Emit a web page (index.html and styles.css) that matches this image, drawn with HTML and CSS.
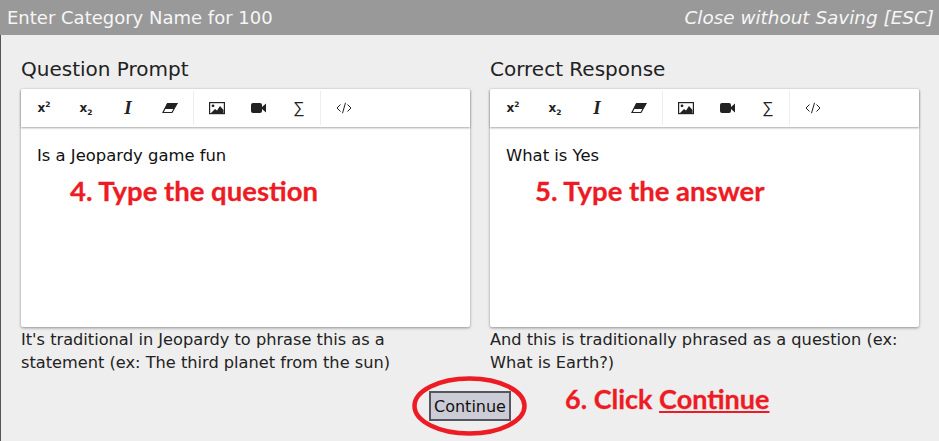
FILE: index.html
```html
<!DOCTYPE html>
<html lang="en">
<head>
    <meta charset="UTF-8">
    <title>Enter Category Name</title>
    <link rel="stylesheet" href="styles.css">
</head>
<body>
    <div class="modal">
        <header class="modal-header">
            <span>Enter Category Name for 100</span>
            <em>Close without Saving [ESC]</em>
        </header>
        <div class="modal-body">
            <div class="columns">
                <section class="column">
                    <h2>Question Prompt</h2>
                    <div class="editor">
                        <div class="toolbar">
                            <div class="tool-group">
                                <button class="tool tool-script"><span>x<sup>2</sup></span></button>
                                <button class="tool tool-script"><span>x<sub>2</sub></span></button>
                                <button class="tool tool-italic">I</button>
                                <button class="tool"><svg width="16" height="12" viewBox="0 0 16 12"><path d="M5.500 1.500h9.500L10 10.500H1z" fill="none" stroke="#222" stroke-width="1.2"/><path d="M5.500 1H15.500L12 7H2.500z" fill="#222"/></svg></button>
                            </div>
                            <div class="tool-group tool-group-media">
                                <button class="tool"><svg width="16" height="14" viewBox="0 0 16 14"><rect x=".6" y="1.600" width="14.800" height="11" fill="none" stroke="#222" stroke-width="1.200"/><circle cx="4" cy="4.800" r="1.400" fill="#222"/><path d="M2 12l4-4 2 1.500 3-4.500 3.500 4v3z" fill="#222"/></svg></button>
                                <button class="tool"><svg width="16" height="12" viewBox="0 0 16 12"><rect x="0" y="1" width="11" height="10" rx="2" fill="#222"/><path d="M11 5l4-3.500v9L11 7z" fill="#222"/></svg></button>
                                <button class="tool tool-sum">∑</button>
                            </div>
                            <div class="tool-group">
                                <button class="tool"><svg width="16" height="12" viewBox="0 0 16 12"><path d="M4.500 2.500L1 6l3.500 3.500M11.500 2.500L15 6l-3.500 3.500M9.500 .8L6.500 11.200" fill="none" stroke="#222" stroke-width="1"/></svg></button>
                            </div>
                        </div>
                        <div class="editor-text">Is a Jeopardy game fun</div>
                    </div>
                    <p class="hint">It's traditional in Jeopardy to phrase this as a statement (ex: The third planet from the sun)</p>
                </section>
                <section class="column">
                    <h2>Correct Response</h2>
                    <div class="editor">
                        <div class="toolbar">
                            <div class="tool-group">
                                <button class="tool tool-script"><span>x<sup>2</sup></span></button>
                                <button class="tool tool-script"><span>x<sub>2</sub></span></button>
                                <button class="tool tool-italic">I</button>
                                <button class="tool"><svg width="16" height="12" viewBox="0 0 16 12"><path d="M5.500 1.500h9.500L10 10.500H1z" fill="none" stroke="#222" stroke-width="1.2"/><path d="M5.500 1H15.500L12 7H2.500z" fill="#222"/></svg></button>
                            </div>
                            <div class="tool-group tool-group-media">
                                <button class="tool"><svg width="16" height="14" viewBox="0 0 16 14"><rect x=".6" y="1.600" width="14.800" height="11" fill="none" stroke="#222" stroke-width="1.200"/><circle cx="4" cy="4.800" r="1.400" fill="#222"/><path d="M2 12l4-4 2 1.500 3-4.500 3.500 4v3z" fill="#222"/></svg></button>
                                <button class="tool"><svg width="16" height="12" viewBox="0 0 16 12"><rect x="0" y="1" width="11" height="10" rx="2" fill="#222"/><path d="M11 5l4-3.500v9L11 7z" fill="#222"/></svg></button>
                                <button class="tool tool-sum">∑</button>
                            </div>
                            <div class="tool-group">
                                <button class="tool"><svg width="16" height="12" viewBox="0 0 16 12"><path d="M4.500 2.500L1 6l3.500 3.500M11.500 2.500L15 6l-3.500 3.500M9.500 .8L6.500 11.200" fill="none" stroke="#222" stroke-width="1"/></svg></button>
                            </div>
                        </div>
                        <div class="editor-text">What is Yes</div>
                    </div>
                    <p class="hint">And this is traditionally phrased as a question (ex: What is Earth?)</p>
                </section>
            </div>
            <div class="actions">
                <button class="continue">Continue</button>
            </div>
        </div>

        <div class="note note-question">4. Type the question</div>
        <div class="note note-answer">5. Type the answer</div>
        <div class="note note-continue">6. Click <u>Continue</u></div>
        <svg class="circle" width="116" height="60" viewBox="0 0 116 60">
            <ellipse cx="57.500" cy="30" rx="55" ry="27.500" fill="none" stroke="#ed1c24" stroke-width="4.500"/>
        </svg>
    </div>
</body>
</html>
```

FILE: styles.css
```css
* {
    box-sizing: border-box;
}

html, body {
    margin: 0;
    padding: 0;
}

body {
    width: 939px;
    height: 441px;
    overflow: hidden;
    font-family: "DejaVu Sans", Verdana, sans-serif;
    color: #222;
}

.modal {
    position: relative;
    display: flex;
    flex-direction: column;
    width: 939px;
    height: 441px;
    background: #eee;
}

.modal-header {
    display: flex;
    justify-content: space-between;
    align-items: center;
    height: 35px;
    padding: 0 5px 0 7px;
    background: #999;
    color: #f6f6f6;
    font-size: 18px;
}

.modal-header em {
    font-size: 18.400px;
}

.modal-body {
    flex: 1;
    padding: 22px 20px 0 20px;
    border-left: 1px solid #555;
}

.columns {
    display: flex;
    gap: 20px;
}

.column {
    flex: 1 1 0;
    min-width: 0;
}

.column:first-child {
    flex: 0 0 449px;
}

h2 {
    margin: 0 0 7px 0;
    font-size: 20px;
    font-weight: normal;
    line-height: 25px;
}

.editor {
    height: 238px;
    background: #fff;
    border-radius: 2px;
    box-shadow: 0 1px 3px rgba(0, 0, 0, 0.4);
}

.toolbar {
    display: flex;
    height: 38px;
    padding: 2px 0;
    box-shadow: 0 1px 2px rgba(0, 0, 0, 0.35);
}

.tool-group {
    display: flex;
    align-items: center;
    padding: 0 2px;
    border-right: 1px solid #eee;
}

.tool-group:last-child {
    border-right: none;
}

.tool-group-media .tool:last-child {
    width: 38px;
}

.tool {
    display: flex;
    justify-content: center;
    align-items: center;
    width: 42px;
    height: 34px;
    padding: 0;
    border: none;
    background: none;
    color: #222;
    font-family: "DejaVu Sans", sans-serif;
}

.tool-script {
    font-size: 12px;
    font-weight: bold;
}

.tool-script sup, .tool-script sub {
    font-size: 7.500px;
    line-height: 0;
}

.tool-italic {
    font-family: "Liberation Serif", serif;
    font-size: 19px;
    font-style: italic;
    font-weight: bold;
}

.tool-sum {
    font-family: "Liberation Sans", sans-serif;
    font-size: 16px;
}

.editor-text {
    padding: 19px 16px;
    font-size: 16.400px;
    line-height: 20px;
    color: #111;
}

.hint {
    margin: 1px 0 0 0;
    font-size: 16.200px;
    line-height: 23px;
}

.actions {
    display: flex;
    justify-content: center;
    margin-top: 17px;
}

.continue {
    width: 82px;
    height: 30px;
    padding: 0;
    border: 2px solid #555560;
    background: #ccccd6;
    color: #111;
    font-family: "DejaVu Sans", sans-serif;
    font-size: 16px;
}

.note {
    position: absolute;
    color: #ed1c24;
    font-family: Lato, "Open Sans", sans-serif;
    font-size: 27.500px;
    font-weight: bold;
    line-height: 32px;
    white-space: nowrap;
    -webkit-text-stroke: 0.3px #ed1c24;
}

.note-question {
    left: 70px;
    top: 175px;
}

.note-answer {
    left: 535px;
    top: 175px;
}

.note-continue {
    left: 565px;
    top: 383px;
    font-size: 27px;
    text-decoration-thickness: 3px;
}

.circle {
    position: absolute;
    left: 412px;
    top: 376px;
}
```
